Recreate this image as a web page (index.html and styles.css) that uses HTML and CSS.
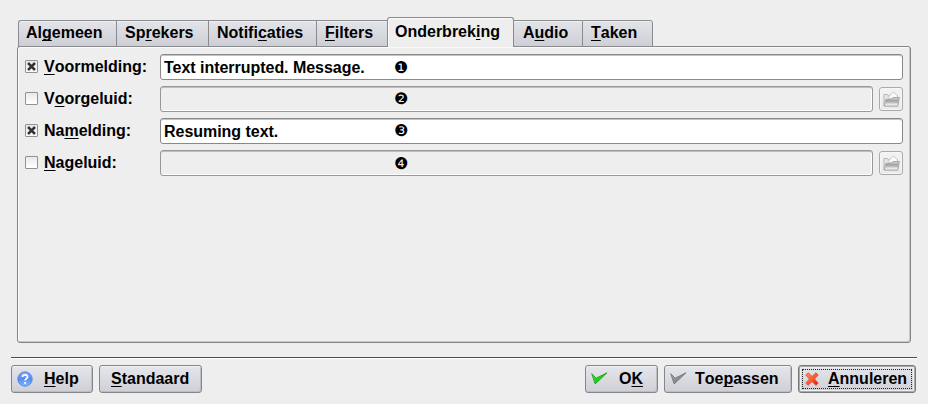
FILE: index.html
```
<!DOCTYPE html>
<html lang="nl">
<head>
<meta charset="utf-8">
<title>Onderbreking</title>
<link rel="stylesheet" href="styles.css">
</head>
<body>
<svg class="defs" width="0" height="0">
  <defs>
    <linearGradient id="gGreen" x1="0" y1="0" x2="1" y2="1"><stop offset="0" stop-color="#54ec48"/><stop offset=".5" stop-color="#14d60c"/><stop offset="1" stop-color="#10a410"/></linearGradient>
    <linearGradient id="gGray" x1="0" y1="0" x2="1" y2="1"><stop offset="0" stop-color="#aaa"/><stop offset="1" stop-color="#707070"/></linearGradient>
    <linearGradient id="gRed" x1="0" y1="0" x2="1" y2="1"><stop offset="0" stop-color="#ff9565"/><stop offset=".5" stop-color="#f96132"/><stop offset="1" stop-color="#f00500"/></linearGradient>
    <linearGradient id="gBlue" x1="0" y1="0" x2="0" y2="1"><stop offset="0" stop-color="#80abff"/><stop offset=".5" stop-color="#568bf5"/><stop offset="1" stop-color="#83bdff"/></linearGradient>
    <linearGradient id="gFolder" x1="0" y1="0" x2="0" y2="1"><stop offset="0" stop-color="#d8d8d8"/><stop offset=".4" stop-color="#a0a0a0"/><stop offset=".8" stop-color="#e8e8e8"/><stop offset="1" stop-color="#ddd"/></linearGradient>
    <symbol id="check" viewBox="0 0 17 14"><path d="M.7 1.7 L5.2 6.2 L16 .8 L4.2 12 Z" stroke-width=".8" stroke-linejoin="round"/></symbol>
    <symbol id="folder" viewBox="0 0 17 16">
      <path d="M1 15 V3.5 H4.5 L5.5 5 H14.5 V8" fill="#e6e6e6" stroke="#b4b4b4"/>
      <path d="M4.5 7 L10.5 .8 L14.6 5 L13.5 8 Z" fill="#fafafa" stroke="#bbb" stroke-width=".8"/>
      <path d="M1.2 15.2 L2.8 8.5 H8 L10 6.5 H16.3 L14.8 15.2 Z" fill="url(#gFolder)" stroke="#a4a4a4" stroke-width=".9"/>
    </symbol>
  </defs>
</svg>
<main class="dialog">
  <nav class="tabs">
    <div class="tab tab-first">Al<u>g</u>emeen</div>
    <div class="tab tab-speakers">Sp<u>r</u>ekers</div>
    <div class="tab tab-notifications">Notifi<u>c</u>aties</div>
    <div class="tab tab-filters"><u>F</u>ilters</div>
    <div class="tab tab-active">Onderbrek<u>i</u>ng</div>
    <div class="tab tab-audio">A<u>u</u>dio</div>
    <div class="tab tab-last"><u>T</u>aken</div>
  </nav>
  <section class="panel">
    <div class="row">
      <span class="box"><svg width="9" height="9" viewBox="0 0 9 9"><path d="M1 1L8 8M8 1L1 8"/></svg></span>
      <label><u>V</u>oormelding:</label>
      <div class="field">Text interrupted. Message.<span class="mark">❶</span></div>
    </div>
    <div class="row">
      <span class="box"></span>
      <label>V<u>o</u>orgeluid:</label>
      <div class="field disabled"><span class="mark mark-up">❷</span></div>
      <div class="browse"><svg width="17" height="16"><use href="#folder"/></svg></div>
    </div>
    <div class="row">
      <span class="box"><svg width="9" height="9" viewBox="0 0 9 9"><path d="M1 1L8 8M8 1L1 8"/></svg></span>
      <label>Na<u>m</u>elding:</label>
      <div class="field">Resuming text.<span class="mark mark-up">❸</span></div>
    </div>
    <div class="row">
      <span class="box"></span>
      <label><u>N</u>ageluid:</label>
      <div class="field disabled"><span class="mark">❹</span></div>
      <div class="browse"><svg width="17" height="16"><use href="#folder"/></svg></div>
    </div>
  </section>
  <hr>
  <footer>
    <div class="btn btn-help"><svg width="16" height="16" viewBox="0 0 16 16"><circle cx="8" cy="8" r="7.2" fill="url(#gBlue)" stroke="#4778dc" stroke-width=".8"/><path d="M5.5 6C5.5 3.2 10.7 3.2 10.5 6C10.4 7.6 8.1 7.7 8.1 9.6M8.1 11V12.7" fill="none" stroke="#fff" stroke-width="1.8"/></svg><span><u>H</u>elp</span></div>
    <div class="btn btn-default"><span><u>S</u>tandaard</span></div>
    <div class="btn btn-ok"><svg width="17" height="14" fill="url(#gGreen)" stroke="#189c18"><use href="#check"/></svg><span>O<u>K</u></span></div>
    <div class="btn btn-apply"><svg width="17" height="14" fill="url(#gGray)" stroke="#707070"><use href="#check"/></svg><span>Toe<u>p</u>assen</span></div>
    <div class="btn btn-cancel"><svg width="14" height="14" viewBox="0 0 14 14"><path d="M3.2 .8L7 4.5L11 .8L13.2 3L9.5 7L13.2 11.2L11 13.3L7 9.6L3 13.3L.8 11L4.5 7L.8 3Z" fill="url(#gRed)" stroke="#e64b28" stroke-width=".9" stroke-linejoin="round"/></svg><span><u>A</u>nnuleren</span></div>
  </footer>
</main>
</body>
</html>
```
FILE: styles.css
```
* { box-sizing: border-box; }
body {
  margin: 0;
  width: 928px;
  height: 404px;
  overflow: hidden;
  background: #eee;
  color: #000;
  font: bold 16px/18px "Liberation Sans", sans-serif;
}
.defs { position: absolute; }
svg { display: block; flex: none; }
u {
  text-decoration: underline;
  text-decoration-thickness: 1px;
  text-underline-offset: 2px;
  text-decoration-skip-ink: none;
}
.dialog { padding: 17px 11px 0; }
.tabs {
  position: relative;
  z-index: 1;
  display: flex;
  align-items: flex-end;
  height: 30px;
  padding-left: 7px;
}
.tab {
  height: 27px;
  padding: 3px 0 0 8px;
  border: solid #8a8b8e;
  border-width: 1px 0 1px 1px;
  background: linear-gradient(#e3e4e8, #cecfd6);
  box-shadow: inset 0 1px #f1f1f4;
  white-space: nowrap;
}
.tab-first { width: 98px; padding-left: 7px; border-radius: 3px 0 0 0; }
.tab-speakers { width: 92px; }
.tab-notifications { width: 108px; }
.tab-filters { width: 71px; }
.tab-active {
  width: 127px;
  height: 30px;
  padding-top: 5px;
  padding-left: 7px;
  border-width: 1px 1px 0;
  border-radius: 3px 3px 0 0;
  background: #eee;
  box-shadow: inset 1px 1px #fafafa;
}
.tab-audio { width: 68px; padding-left: 9px; border-left: 0; }
.tab-last { width: 71px; border-right-width: 1px; border-radius: 0 3px 0 0; font-kerning: none; }
.panel {
  display: flex;
  flex-direction: column;
  gap: 6px;
  height: 297px;
  margin: -1px 6px 0;
  padding: 7px 7px 0;
  border: 1px solid #858585;
  border-radius: 3px;
  box-shadow: inset 1px 1px #fafafa, inset -1px -1px #c8c8c8;
}
.row { display: flex; align-items: center; height: 26px; }
.box {
  display: flex;
  align-items: center;
  justify-content: center;
  width: 13px;
  height: 13px;
  margin-bottom: 2px;
  border: 1px solid #929292;
  border-radius: 1px;
  background: linear-gradient(#e9e9e9, #fff);
}
.box path { stroke: #343434; stroke-width: 2.5; }
label { width: 116px; margin: 0 0 1px 6px; font-kerning: none; }
.field {
  position: relative;
  flex: 1;
  height: 26px;
  padding: 4px 3px 0;
  border: 1px solid #898989;
  border-radius: 3px;
  background: #fff;
  box-shadow: inset 0 1px #c4c4c4;
  letter-spacing: -.03px;
}
.disabled {
  background: #eee;
  border-color: #999;
  box-shadow: inset 0 1px #bdbdbd, inset -1px -1px #fff;
}
.mark {
  position: absolute;
  left: 233px;
  top: 4px;
  font: 16px/18px "DejaVu Sans", sans-serif;
}
.mark-up { top: 3px; }
.browse {
  display: flex;
  align-items: center;
  justify-content: center;
  width: 24px;
  height: 24px;
  margin-left: 6px;
  border: 1px solid #aaa;
  border-radius: 3px;
  background: linear-gradient(#f3f3f3, #eaeaea);
  box-shadow: inset 0 0 0 1px #f6f6f6;
}
hr {
  height: 2px;
  margin: 14px 0 6px;
  border: 0;
  border-top: 1px solid #4c4c4c;
  background: #fff;
}
footer { display: flex; padding-right: 1px; font-kerning: none; }
.btn {
  display: flex;
  align-items: center;
  height: 28px;
  border: 1px solid #858689;
  border-radius: 3px;
  background: linear-gradient(#e5e6eb, #cfd0d7);
  box-shadow: inset 0 1px #f3f3f6, inset -1px -1px #bcbdc2;
  white-space: nowrap;
}
.btn-help { width: 82px; padding-left: 5px; gap: 11px; }
.btn-default { width: 103px; margin-left: 6px; padding-left: 11px; }
.btn-ok { width: 73px; margin-left: auto; padding-left: 5px; gap: 11px; }
.btn-apply { width: 128px; margin-left: 6px; padding-left: 5px; gap: 8px; }
.btn-cancel {
  width: 118px;
  margin-left: 6px;
  padding-left: 6px;
  gap: 9px;
  border: 1px solid #777;
  outline: 1px dotted #222;
  outline-offset: -5px;
  box-shadow: inset 0 0 0 1px #aaa, inset 0 0 0 2px #eee;
}
```
